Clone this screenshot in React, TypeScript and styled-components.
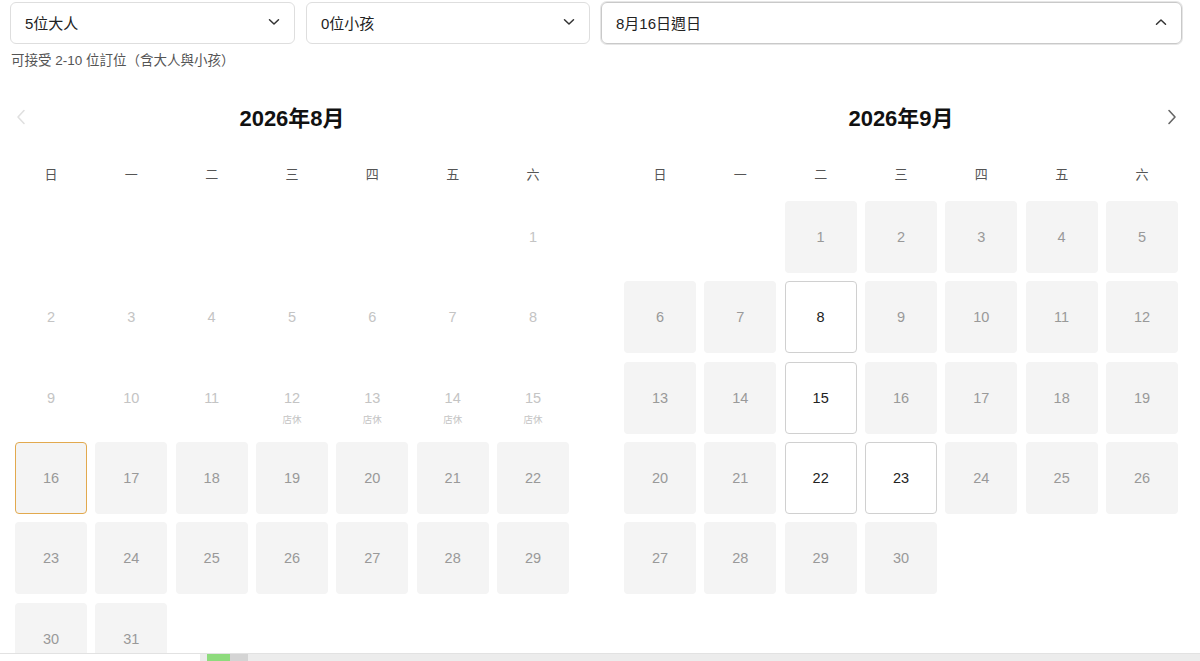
import React from "react";
import styled, { createGlobalStyle, css } from "styled-components";

const Global = createGlobalStyle`
  html, body { margin: 0; padding: 0; background: #fff; }
  body { font-family: "Liberation Sans", "Noto Sans CJK TC", sans-serif; color: #222; overflow: hidden; }
  * { box-sizing: border-box; }
`;

const Page = styled.div`
  padding: 2px 18px 0 10px;
  width: 1200px;
`;

const SelectRow = styled.div`
  display: grid;
  grid-template-columns: 285px 284px 1fr;
  gap: 11px;
`;

const Select = styled.div<{ $focused?: boolean }>`
  height: 42px;
  border: 1px solid ${(p) => (p.$focused ? "#c9c9c9" : "#dedede")};
  border-radius: 6px;
  display: flex;
  align-items: center;
  justify-content: space-between;
  padding: 0 14px 2px 14px;
  font-size: 15px;
  color: #222;
  box-shadow: ${(p) => (p.$focused ? "0 0 0 1px #e6e6e6" : "none")};
`;

const Helper = styled.div`
  margin-top: 7px;
  padding-left: 1px;
  font-size: 13.5px;
  line-height: 20px;
  color: #555;
`;

const Months = styled.div`
  display: flex;
  gap: 55px;
  padding-left: 5px;
  margin-top: 29px;
`;

const Month = styled.div`
  width: 554px;
`;

const Header = styled.div`
  display: grid;
  grid-template-columns: 12px 1fr 12px;
  align-items: center;
  height: 30px;
`;

const Title = styled.div`
  text-align: center;
  font-size: 22px;
  font-weight: 700;
  color: #111;
`;

const Arrow = styled.div`
  display: flex;
  justify-content: center;
  align-items: center;
  padding-top: 2px;
`;

const Weekdays = styled.div`
  display: grid;
  grid-template-columns: repeat(7, 72px);
  column-gap: 8.33px;
  margin-top: 35px;
  height: 20px;
`;

const Weekday = styled.div`
  text-align: center;
  font-size: 13px;
  line-height: 20px;
  color: #555;
`;

const Grid = styled.div`
  display: grid;
  grid-template-columns: repeat(7, 72px);
  grid-auto-rows: 72px;
  gap: 8.33px;
  margin-top: 16px;
`;

type Kind = "empty" | "past" | "avail" | "open" | "selected";

const Cell = styled.div<{ $kind: Kind }>`
  position: relative;
  border-radius: 4px;
  display: flex;
  align-items: center;
  justify-content: center;
  font-size: 14.5px;
  ${(p) =>
    p.$kind === "past" &&
    css`
      color: #c4c4c4;
    `}
  ${(p) =>
    p.$kind === "avail" &&
    css`
      background: #f4f4f4;
      color: #999;
    `}
  ${(p) =>
    p.$kind === "selected" &&
    css`
      background: #f4f4f4;
      color: #999;
      border: 1px solid #e2a94e;
    `}
  ${(p) =>
    p.$kind === "open" &&
    css`
      background: #fff;
      color: #222;
      border: 1px solid #d0d0d0;
    `}
`;

const Closed = styled.span`
  position: absolute;
  left: 0;
  right: 0;
  top: calc(50% + 14px);
  text-align: center;
  font-size: 9.5px;
  color: #c4c4c4;
`;

const BottomBar = styled.div`
  position: fixed;
  left: 0;
  right: 0;
  top: 653px;
  height: 8px;
  background: #ececec;
  border-top: 1px solid #e2e2e2;
  display: flex;
`;

const BarWhite = styled.div`
  width: 200px;
  background: #fff;
`;

const BarSeg = styled.div<{ $w: number; $c: string; $ml?: number }>`
  width: ${(p) => p.$w}px;
  margin-left: ${(p) => p.$ml || 0}px;
  background: ${(p) => p.$c};
`;

const ChevronDown = () => (
  <svg width="12" height="8" viewBox="0 0 12 8" fill="none">
    <path d="M1.5 1.8 L6 6 L10.5 1.8" stroke="#333" strokeWidth="1.5" strokeLinecap="round" strokeLinejoin="round" />
  </svg>
);
const ChevronUp = () => (
  <svg width="12" height="8" viewBox="0 0 12 8" fill="none">
    <path d="M1.5 6.2 L6 2 L10.5 6.2" stroke="#333" strokeWidth="1.5" strokeLinecap="round" strokeLinejoin="round" />
  </svg>
);
const ChevronSide = ({ dir, color }: { dir: "l" | "r"; color: string }) => (
  <svg width="10" height="16" viewBox="0 0 10 16" fill="none">
    <path
      d={dir === "l" ? "M8 1.5 L2 8 L8 14.5" : "M2 1.5 L8 8 L2 14.5"}
      stroke={color}
      strokeWidth="1.6"
      strokeLinecap="round"
      strokeLinejoin="round"
    />
  </svg>
);

const WEEK = ["日", "一", "二", "三", "四", "五", "六"];

type Day = { n: number; kind: Kind; closed?: boolean } | null;

function buildAug(): Day[] {
  const days: Day[] = Array(6).fill(null);
  for (let d = 1; d <= 31; d++) {
    let kind: Kind = "avail";
    if (d < 16) kind = "past";
    if (d === 16) kind = "selected";
    days.push({ n: d, kind, closed: d >= 12 && d <= 15 });
  }
  return days;
}

function buildSep(): Day[] {
  const days: Day[] = Array(2).fill(null);
  const open = [8, 15, 22, 23];
  for (let d = 1; d <= 30; d++) {
    days.push({ n: d, kind: open.includes(d) ? "open" : "avail" });
  }
  return days;
}

const MonthView = ({ title, days, prev, next }: { title: string; days: Day[]; prev?: boolean; next?: boolean }) => (
  <Month>
    <Header>
      <Arrow>{prev && <ChevronSide dir="l" color="#e0e0e0" />}</Arrow>
      <Title>{title}</Title>
      <Arrow>{next && <ChevronSide dir="r" color="#666" />}</Arrow>
    </Header>
    <Weekdays>
      {WEEK.map((w) => (
        <Weekday key={w}>{w}</Weekday>
      ))}
    </Weekdays>
    <Grid>
      {days.map((d, i) =>
        d ? (
          <Cell key={i} $kind={d.kind}>
            {d.n}
            {d.closed && <Closed>店休</Closed>}
          </Cell>
        ) : (
          <Cell key={i} $kind="empty" />
        )
      )}
    </Grid>
  </Month>
);

export default function App() {
  return (
    <>
      <Global />
      <Page>
        <SelectRow>
          <Select>
            <span>5位大人</span>
            <ChevronDown />
          </Select>
          <Select>
            <span>0位小孩</span>
            <ChevronDown />
          </Select>
          <Select $focused>
            <span>8月16日週日</span>
            <ChevronUp />
          </Select>
        </SelectRow>
        <Helper>可接受 2-10 位訂位（含大人與小孩）</Helper>
        <Months>
          <MonthView title="2026年8月" days={buildAug()} prev />
          <MonthView title="2026年9月" days={buildSep()} next />
        </Months>
      </Page>
      <BottomBar>
        <BarWhite />
        <BarSeg $w={23} $c="#8edb7d" $ml={7} />
        <BarSeg $w={18} $c="#d4d4d4" />
      </BottomBar>
    </>
  );
}
